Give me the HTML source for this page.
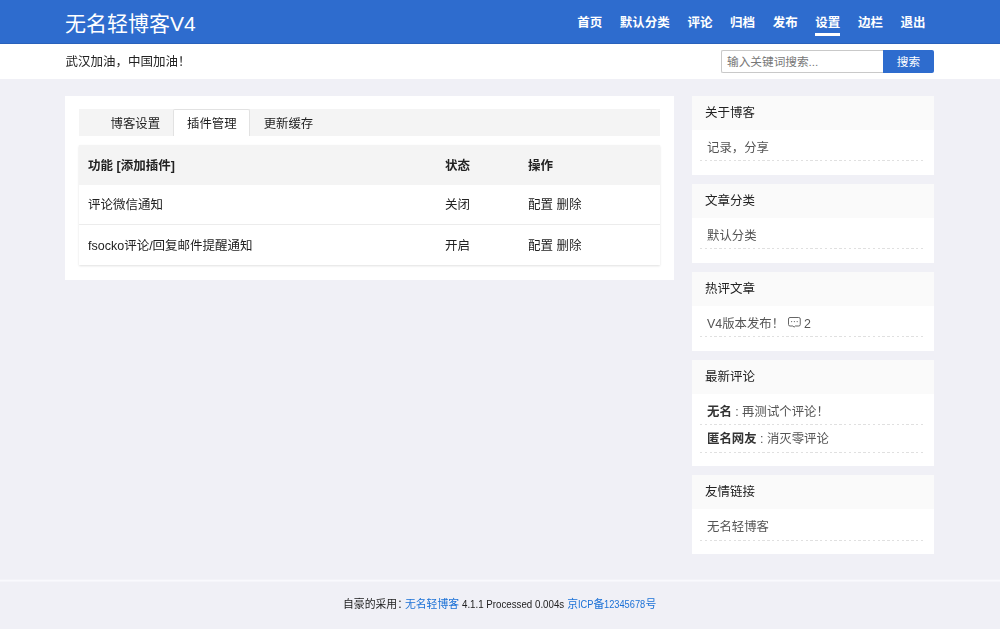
<!DOCTYPE html>
<html lang="zh-CN">
<head>
<meta charset="utf-8">
<title>无名轻博客V4</title>
<style>
*{margin:0;padding:0;box-sizing:border-box;}
html,body{width:1000px;height:629px;overflow:hidden;}
body{background:#f0f0f6;font-family:"Liberation Sans","Noto Sans CJK SC",sans-serif;color:#222;font-size:11.67px;position:relative;}
.wrap{position:absolute;left:0;top:0;width:1000px;height:629px;opacity:.9999;}
a{color:inherit;text-decoration:none;}
ul{list-style:none;}

/* header */
.header{position:absolute;left:0;top:0;width:1000px;height:43.7px;background:#2e6cce;box-shadow:inset 0 -1px 0 #2961bb;z-index:2;}
.logo{position:absolute;left:65px;top:0;height:44px;line-height:47px;font-size:21px;color:#fff;font-weight:400;white-space:nowrap;}
.nav{position:absolute;right:74.5px;top:0;height:44px;display:flex;}
.nav li{margin-left:17.6px;font-size:12.5px;font-weight:bold;color:#fff;line-height:47px;position:relative;white-space:nowrap;}
.nav li.on:after{content:"";position:absolute;left:0;right:0;top:33px;height:2.5px;background:#fff;}

/* sub bar */
.subbar{position:absolute;left:0;top:43.5px;width:1000px;height:35px;background:#fff;}
.notice{position:absolute;left:65.5px;top:0;line-height:37px;font-size:12.5px;color:#222;white-space:nowrap;}
.search{position:absolute;left:721px;top:6px;width:213px;height:23px;display:flex;}
.search .inp{width:162px;height:23px;border:1px solid #c9c9c9;border-right:none;border-radius:2px 0 0 2px;background:#fff;color:#777;font-size:11.67px;line-height:21px;padding-left:5px;white-space:nowrap;}
.search .btn{width:51px;height:23px;background:#2e6cce;color:#fff;font-size:11.67px;line-height:24px;text-align:center;border-radius:0 2px 2px 0;}

/* main */
.main{position:absolute;left:65px;top:96px;width:609px;height:183.5px;background:#fff;}
.tabs{position:absolute;left:14px;top:12.7px;width:580.5px;height:27.5px;background:#f4f4f4;display:flex;padding-left:18px;}
.tabs li{padding:0 13.5px;font-size:12.4px;line-height:30px;color:#222;white-space:nowrap;height:27.5px;}
.tabs li.on{background:#fff;border:1px solid #e2e2e2;border-bottom:none;border-radius:2px 2px 0 0;padding:0 12.5px 0 13.5px;margin-left:-1px;line-height:28px;}
.tbl{position:absolute;left:14px;top:49px;width:580.5px;border-collapse:collapse;box-shadow:0 1px 2px rgba(0,0,0,.12);background:#fff;}
.tbl th,.tbl td{height:40px;text-align:left;font-size:12.5px;padding:0 0 1.6px 9px;color:#222;white-space:nowrap;}
.tbl th{background:#f4f4f4;font-weight:bold;}
.tbl td{height:39.6px;}
.tbl tr+tr td{border-top:1px solid #ececec;}
.tbl tr:first-child+tr td{border-top:none;}
.tbl tr:last-child td{height:40.5px;}

/* sidebar */
.side{position:absolute;left:692px;top:95.7px;width:242.3px;}
.card{background:#fff;margin-bottom:9px;padding-bottom:13.5px;}
.card h3{height:34px;line-height:35px;background:#fafafa;font-size:12.5px;font-weight:normal;color:#222;padding-left:13px;}
.card ul{padding:4px 8px 0 8px;}
.card li{height:27.5px;line-height:29px;background:repeating-linear-gradient(90deg,#e0e0e0 0,#e0e0e0 2.4px,transparent 2.4px,transparent 4.8px) left bottom/100% 1px no-repeat;font-size:12.4px;color:#555;padding-left:7px;white-space:nowrap;}
.card li b{color:#333;}

/* footer */
.footer{position:absolute;left:0;top:580px;width:1000px;height:49px;background:transparent;border-top:1px solid #f9f9fd;box-shadow:inset 0 1px 0 #f5f5fa,0 -1px 0 #f3f3f8;font-size:10.83px;line-height:47.6px;color:#222;white-space:nowrap;}
.footer .in{position:absolute;left:343px;top:0;}
.footer a{color:#1a70d6;}
.footer .colon{margin-right:-3px;}
.lat{display:inline-block;transform-origin:0 50%;}
</style>
</head>
<body>
<div class="wrap">
<div class="header">
  <div class="logo">无名轻博客V4</div>
  <ul class="nav">
    <li>首页</li><li>默认分类</li><li>评论</li><li>归档</li><li>发布</li><li class="on">设置</li><li>边栏</li><li>退出</li>
  </ul>
</div>
<div class="subbar">
  <div class="notice">武汉加油，中国加油！</div>
  <div class="search"><div class="inp">输入关键词搜索...</div><div class="btn">搜索</div></div>
</div>

<div class="main">
  <ul class="tabs"><li>博客设置</li><li class="on">插件管理</li><li>更新缓存</li></ul>
  <table class="tbl">
    <tr><th style="width:357px">功能 [添加插件]</th><th style="width:83px">状态</th><th>操作</th></tr>
    <tr><td>评论微信通知</td><td>关闭</td><td>配置 删除</td></tr>
    <tr><td>fsocko评论/回复邮件提醒通知</td><td>开启</td><td>配置 删除</td></tr>
  </table>
</div>

<div class="side">
  <div class="card"><h3>关于博客</h3><ul><li>记录，分享</li></ul></div>
  <div class="card"><h3>文章分类</h3><ul><li>默认分类</li></ul></div>
  <div class="card"><h3>热评文章</h3><ul><li>V4版本发布！ <svg class="ic" width="13" height="11" viewBox="0 0 13 11" style="vertical-align:-0.75px"><path d="M2 .5h8.75a1.5 1.5 0 0 1 1.5 1.5v5.5a1.5 1.5 0 0 1-1.5 1.5H7.3L6.1 10.2 4.9 9H2A1.500 1.500 0 0 1 .5 7.500v-5.500A1.500 1.500 0 0 1 2 .5z" fill="none" stroke="#666" stroke-width="1"/><circle cx="3.600" cy="4.600" r=".65" fill="#666"/><circle cx="6.400" cy="4.600" r=".65" fill="#666"/><circle cx="9.200" cy="4.600" r=".65" fill="#666"/></svg> 2</li></ul></div>
  <div class="card"><h3>最新评论</h3><ul><li><b>无名</b> : 再测试个评论！</li><li><b>匿名网友</b> : 消灭零评论</li></ul></div>
  <div class="card"><h3>友情链接</h3><ul><li>无名轻博客</li></ul></div>
</div>

<div class="footer"><div class="in">自豪的采用<span class="colon">：</span><a>无名轻博客</a> <span class="lat" style="transform:scaleX(.898);margin-right:-11.6px">4.1.1 Processed 0.004s</span> <a>京<span class="lat" style="transform:scaleX(.853);margin-right:-2.65px">ICP</span>备<span class="lat" style="transform:scaleX(.855);margin-right:-7px">12345678</span>号</a></div></div>
</div>
</body>
</html>
